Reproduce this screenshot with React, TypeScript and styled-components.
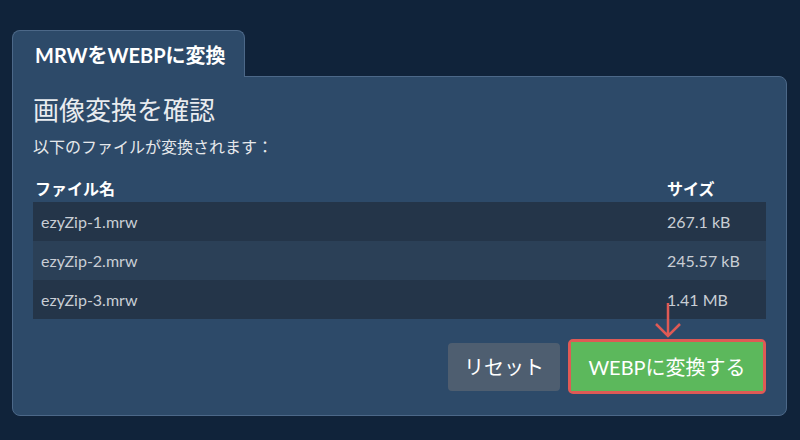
import React from "react";
import styled, { createGlobalStyle } from "styled-components";

const GlobalStyle = createGlobalStyle`
  html, body {
    margin: 0;
    padding: 0;
    background: #10233a;
    font-family: Lato, "Noto Sans CJK JP", sans-serif;
  }
  * { box-sizing: border-box; }
`;

const Page = styled.div`
  width: 800px;
  height: 440px;
  padding: 30px 13px 0 12px;
  background: #10233a;
`;

const Tab = styled.div`
  position: relative;
  z-index: 1;
  display: flex;
  align-items: center;
  width: 233px;
  height: 47px;
  margin-bottom: -1px;
  padding: 2px 0 0 22px;
  background: #2d4a69;
  border: 1px solid #4c6888;
  border-bottom: none;
  border-radius: 8px 8px 0 0;
  color: #ffffff;
  font-size: 20px;
  font-weight: 700;
  line-height: 28px;
`;

const Panel = styled.div`
  position: relative;
  background: #2d4a69;
  border: 1px solid #4c6888;
  border-radius: 0 8px 8px 8px;
  padding: 17px 20px 21px 20px;
`;

const Title = styled.h2`
  margin: 0;
  font-size: 26px;
  font-weight: 400;
  line-height: 32px;
  color: #e9ecef;
`;

const Subtitle = styled.p`
  margin: 9px 0 0 0;
  font-size: 16px;
  line-height: 24px;
  color: #e6e8eb;
`;

const Table = styled.div`
  margin-top: 18px;
  display: grid;
  grid-template-columns: 1fr 107px;
`;

const HeadCell = styled.div<{ $pad: number }>`
  height: 25px;
  padding-left: ${(p) => p.$pad}px;
  font-size: 16px;
  font-weight: 700;
  line-height: 24px;
  color: #ffffff;
`;

const Cell = styled.div<{ $alt: boolean }>`
  height: 39px;
  display: flex;
  align-items: center;
  padding-left: 8px;
  background: ${(p) => (p.$alt ? "#2b4057" : "#243549")};
  font-size: 16px;
  color: #c9ced5;
`;

const Actions = styled.div`
  margin-top: 20px;
  display: flex;
  justify-content: flex-end;
  align-items: center;
  gap: 8px;
`;

const Button = styled.button<{ $kind: "reset" | "go" }>`
  height: 48px;
  padding: 0 16px;
  border: none;
  border-radius: 4px;
  font-family: Lato, "Noto Sans CJK JP", sans-serif;
  font-size: 20px;
  color: #ffffff;
  background: ${(p) => (p.$kind === "go" ? "#5cb85c" : "#4e5e70")};
  cursor: pointer;
`;

const Highlight = styled.div`
  border: 3px solid #df5a55;
  border-radius: 5px;
  display: flex;
`;

const GoButton = styled(Button)`
  width: 192px;
  height: 49px;
  border-radius: 0;
`;

const Arrow = styled.svg`
  position: absolute;
  left: 642px;
  top: 225px;
`;

const files = [
  { name: "ezyZip-1.mrw", size: "267.1 kB" },
  { name: "ezyZip-2.mrw", size: "245.57 kB" },
  { name: "ezyZip-3.mrw", size: "1.41 MB" },
];

export default function App() {
  return (
    <>
      <GlobalStyle />
      <Page>
        <Tab>MRWをWEBPに変換</Tab>
        <Panel>
          <Title>画像変換を確認</Title>
          <Subtitle>以下のファイルが変換されます：</Subtitle>
          <Table>
            <HeadCell $pad={2}>ファイル名</HeadCell>
            <HeadCell $pad={8}>サイズ</HeadCell>
            {files.map((f, i) => (
              <React.Fragment key={f.name}>
                <Cell $alt={i % 2 === 1}>{f.name}</Cell>
                <Cell $alt={i % 2 === 1}>{f.size}</Cell>
              </React.Fragment>
            ))}
          </Table>
          <Actions>
            <Button $kind="reset">リセット</Button>
            <Highlight>
              <GoButton $kind="go">WEBPに変換する</GoButton>
            </Highlight>
          </Actions>
          <Arrow width="30" height="38" viewBox="0 0 30 38">
            <path
              d="M13 1 V34 M1 22 L13 34 L25 22"
              fill="none"
              stroke="#df5a55"
              strokeWidth="2.5"
            />
          </Arrow>
        </Panel>
      </Page>
    </>
  );
}
